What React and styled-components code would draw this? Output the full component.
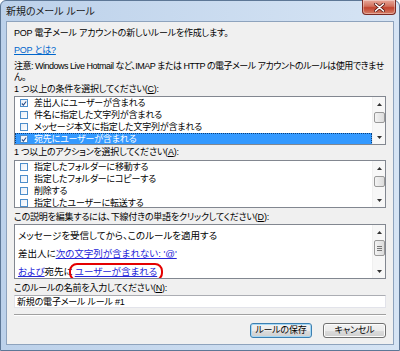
import React from 'react';
import styled, { createGlobalStyle } from 'styled-components';

const GlobalStyle = createGlobalStyle`
	html, body {
		margin: 0;
		padding: 0;
		background: #fff;
	}
	* {
		box-sizing: border-box;
	}
	body {
		font-family: 'Liberation Sans', 'Noto Sans CJK JP', sans-serif;
		font-feature-settings: 'palt';
	}
`;

const conditions = [
	{ label: '差出人にユーザーが含まれる', checked: true },
	{ label: '件名に指定した文字列が含まれる' },
	{ label: 'メッセージ本文に指定した文字列が含まれる' },
	{ label: '宛先にユーザーが含まれる', checked: true, selected: true },
];

const actions = [
	{ label: '指定したフォルダーに移動する' },
	{ label: '指定したフォルダーにコピーする' },
	{ label: '削除する' },
	{ label: '指定したユーザーに転送する' },
];

const Window = styled.div`
	width: 400px;
	height: 351px;
	display: flex;
	flex-direction: column;
	padding: 0 5px 5px 5px;
	border: 1px solid #5d7796;
	border-radius: 6px 6px 0 0;
	background: linear-gradient(to right, #bcd1ea, #d6e4f4);
`;

const TitleBar = styled.div`
	height: 20px;
	display: flex;
	align-items: flex-start;
`;

const Title = styled.div`
	padding: 4px 0 0 0;
	font-size: 10px;
	line-height: 13px;
	color: #1a1a1a;
`;

const CloseButton = styled.div`
	margin-left: auto;
	margin-right: -2px;
	margin-top: -1px;
	width: 34px;
	height: 15px;
	display: flex;
	align-items: center;
	justify-content: center;
	border: 1px solid #7a2a24;
	border-top: none;
	border-radius: 0 0 4px 4px;
	background: linear-gradient(to bottom, #e9a99b, #d1705c 45%, #c2432e 55%, #d5806a);
	box-shadow: inset 0 0 0 1px rgba(255, 255, 255, 0.35);
`;

const Client = styled.div`
	flex: 1;
	display: flex;
	flex-direction: column;
	padding: 5px 7px 0 7px;
	border: 1px solid #8ea3bd;
	background: #f0f0f0;
	font-size: 9px;
	letter-spacing: -0.2px;
	color: #000;
`;

const Line = styled.div`
	line-height: ${(p) => p.$lh || 12}px;
	margin-top: ${(p) => p.$mt || 0}px;
	letter-spacing: ${(p) => (p.$tight ? '-0.5px' : 'inherit')};
	white-space: nowrap;
`;

const HelpLink = styled.span`
	color: #0066cc;
	text-decoration: underline;
`;

const ListBox = styled.div`
	margin-top: ${(p) => p.$mt || 0}px;
	height: ${(p) => p.$h}px;
	display: flex;
	border: 1px solid #828790;
	background: #fff;
	overflow: hidden;
`;

const Rows = styled.div`
	flex: 1;
	display: flex;
	flex-direction: column;
	overflow: hidden;
`;

const Row = styled.div`
	flex: 0 0 12px;
	display: flex;
	align-items: center;
	gap: 6px;
	padding-left: 5px;
	white-space: nowrap;
	color: ${(p) => (p.$selected ? '#fff' : '#000')};
	background: ${(p) => (p.$selected ? '#3399ff' : 'transparent')};
	outline: ${(p) => (p.$selected ? '1px dotted #0b3f7a' : 'none')};
	outline-offset: -1px;
	line-height: 12px;
`;

const CheckBox = styled.span`
	flex: 0 0 8px;
	width: 8px;
	height: 8px;
	display: flex;
	align-items: center;
	justify-content: center;
	border: 1px solid #4d8ecb;
	background: linear-gradient(135deg, #e7eef7, #ffffff);
`;

const ScrollBar = styled.div`
	flex: 0 0 13px;
	display: flex;
	flex-direction: column;
	align-items: center;
	background: #f7f7f7;
	border-left: 1px solid #f0f0f0;
`;

const Arrow = styled.div`
	height: ${(p) => p.$h || 12}px;
	display: flex;
	align-items: center;
	justify-content: center;
`;

const Thumb = styled.div`
	width: 11px;
	height: ${(p) => p.$h}px;
	display: flex;
	flex-direction: column;
	align-items: center;
	justify-content: center;
	gap: 1px;
	border: 1px solid #999;
	border-radius: 2px;
	background: linear-gradient(to right, #f3f3f3, #dcdcdc);
`;

const Grip = styled.span`
	width: 5px;
	height: 1px;
	background: #777;
`;

const Spacer = styled.div`
	flex: 1;
`;

const DescBox = styled.div`
	margin-top: 1px;
	height: 55px;
	display: flex;
	border: 1px solid #828790;
	background: #fff;
	overflow: hidden;
`;

const DescText = styled.div`
	flex: 1;
	padding: 2px 0 0 3px;
	font-size: 9.5px;
	letter-spacing: 0;
	line-height: 18px;
	white-space: nowrap;
`;

const RuleLink = styled.span`
	color: #2424d8;
	text-decoration: underline;
`;

const Marked = styled.span`
	display: inline-block;
	line-height: 12px;
	padding: 1px 4px;
	margin: 0 -6px 0 -4px;
	border: 2px solid #e40000;
	border-radius: 8px;
`;

const NameInput = styled.div`
	margin-top: 1px;
	height: 13px;
	padding-left: 2px;
	display: flex;
	align-items: center;
	border: 1px solid #e2e3ea;
	border-top-color: #abadb3;
	background: #fff;
	white-space: nowrap;
`;

const Separator = styled.div`
	margin-top: 6px;
	height: 2px;
	border-top: 1px solid #a0a0a0;
	border-bottom: 1px solid #fff;
`;

const ButtonRow = styled.div`
	margin-top: 7px;
	display: flex;
	justify-content: flex-end;
	gap: 11px;
`;

const Button = styled.div`
	width: ${(p) => p.$w}px;
	height: 15px;
	display: flex;
	align-items: center;
	justify-content: center;
	border: 1px solid ${(p) => (p.$default ? '#3c7fb1' : '#707070')};
	border-radius: 3px;
	background: linear-gradient(to bottom, #f2f2f2, #ebebeb 50%, #dddddd 50%, #cfcfcf);
	box-shadow: ${(p) => (p.$default ? 'inset 0 0 0 1px #a6d8f5' : 'inset 0 0 0 1px #fcfcfc')};
	font-size: 9px;
	line-height: 13px;
`;

const CheckMark = () => (
	<svg width="7" height="7" viewBox="0 0 7 7">
		<path d="M1 3.5 L2.8 5.4 L6 1.2" fill="none" stroke="#2a4f8a" strokeWidth="1.3" />
	</svg>
);

const UpArrow = () => (
	<svg width="5" height="3" viewBox="0 0 5 3">
		<path d="M0 3 L2.5 0 L5 3 Z" fill="#333" />
	</svg>
);

const DownArrow = () => (
	<svg width="5" height="3" viewBox="0 0 5 3">
		<path d="M0 0 L5 0 L2.5 3 Z" fill="#333" />
	</svg>
);

const CloseGlyph = () => (
	<svg width="11" height="9" viewBox="0 0 11 9">
		<path d="M1.5 1 L9.5 8 M9.5 1 L1.5 8" stroke="#5a1a14" strokeWidth="3" strokeLinecap="round" />
		<path d="M1.5 1 L9.5 8 M9.5 1 L1.5 8" stroke="#fff" strokeWidth="1.6" strokeLinecap="round" />
	</svg>
);

const CheckList = ({ items, height, mt, thumbTop }) => (
	<ListBox $h={height} $mt={mt}>
		<Rows>
			{items.map((item) => (
				<Row key={item.label} $selected={item.selected}>
					<CheckBox>{item.checked && <CheckMark />}</CheckBox>
					{item.label}
				</Row>
			))}
		</Rows>
		<ScrollBar>
			<Arrow $h={thumbTop}>
				<UpArrow />
			</Arrow>
			<Thumb $h={11} />
			<Spacer />
			<Arrow $h={13}>
				<DownArrow />
			</Arrow>
		</ScrollBar>
	</ListBox>
);

export default function App() {
	return (
		<>
			<GlobalStyle />
			<Window>
				<TitleBar>
					<Title>新規のメール ルール</Title>
					<CloseButton>
						<CloseGlyph />
					</CloseButton>
				</TitleBar>
				<Client>
					<Line>POP 電子メール アカウントの新しいルールを作成します。</Line>
					<Line $mt={5}>
						<HelpLink>POP とは?</HelpLink>
					</Line>
					<Line $mt={5} $lh={11} $tight>
						注意: Windows Live Hotmail など、IMAP または HTTP の電子メール アカウントのルールは使用できませ
						<br />
						ん。
					</Line>
					<Line>
						1 つ以上の条件を選択してください(<u>C</u>):
					</Line>
					<CheckList items={conditions} height={49} mt={1} thumbTop={15} />
					<Line $mt={1}>
						1 つ以上のアクションを選択してください(<u>A</u>):
					</Line>
					<CheckList items={actions} height={48} mt={2} thumbTop={15} />
					<Line $mt={3}>
						この説明を編集するには、下線付きの単語をクリックしてください(<u>D</u>):
					</Line>
					<DescBox>
						<DescText>
							<div>メッセージを受信してから、このルールを適用する</div>
							<div>
								差出人に<RuleLink>次の文字列が含まれない: '@'</RuleLink>
							</div>
							<div>
								<RuleLink>および</RuleLink>宛先に
								<Marked>
									<RuleLink>ユーザーが含まれる</RuleLink>
								</Marked>
							</div>
						</DescText>
						<ScrollBar>
							<Arrow $h={15}>
								<UpArrow />
							</Arrow>
							<Thumb $h={16}>
								<Grip />
								<Grip />
								<Grip />
							</Thumb>
							<Spacer />
							<Arrow $h={13}>
								<DownArrow />
							</Arrow>
						</ScrollBar>
					</DescBox>
					<Line $mt={3}>
						このルールの名前を入力してください(<u>N</u>):
					</Line>
					<NameInput>新規の電子メール ルール #1</NameInput>
					<Separator />
					<ButtonRow>
						<Button $w={62} $default>
							ルールの保存
						</Button>
						<Button $w={63}>キャンセル</Button>
					</ButtonRow>
				</Client>
			</Window>
		</>
	);
}
